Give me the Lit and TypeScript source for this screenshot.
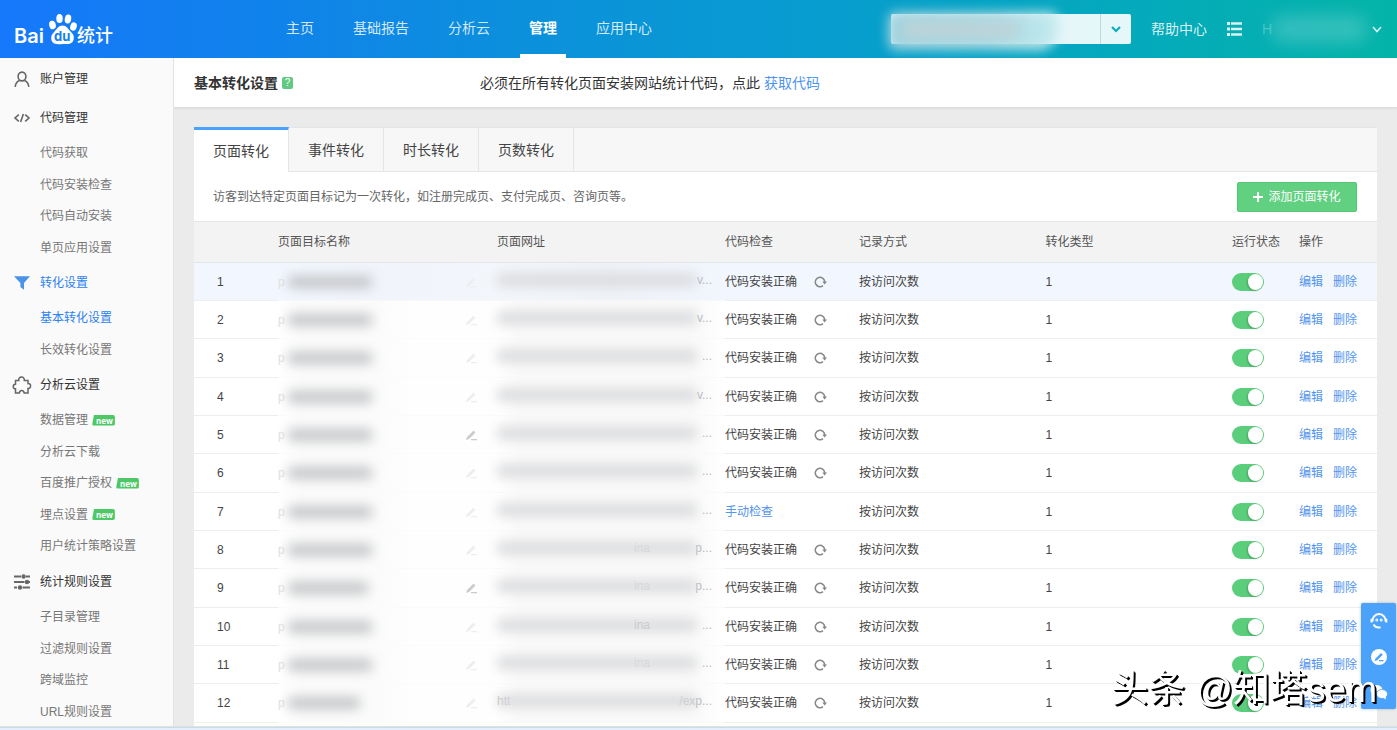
import { LitElement, html, css, svg, nothing } from "lit";
import { customElement, property, state } from "lit/decorators.js";
import { classMap } from "lit/directives/class-map.js";

const icons: Record<string, unknown> = {
  user: svg`<g fill="none" stroke="currentColor" stroke-width="1.6"><ellipse cx="8" cy="5.5" rx="3.9" ry="4.4"/><path d="M1.2 15.8C1.6 12.3 3 10.6 5.6 9.6M14.8 15.8C14.4 12.3 13 10.6 10.4 9.6"/></g>`,
  code: svg`<g fill="none" stroke="currentColor" stroke-width="1.6"><path d="M4.8 4.6L1 8L4.8 11.4M11.2 4.6L15 8L11.2 11.4M9.4 4L6.6 12"/></g>`,
  funnel: svg`<path fill="currentColor" d="M0 1.2H16L10 8V14.8L6.4 12V8Z"/>`,
  puzzle: svg`<path fill="none" stroke="currentColor" stroke-width="1.5" d="M1.5 3.4H4.8C4.4 1.4 5.7 0 7.500 0S10.600 1.400 10.300 3.400H14V6.600C15.600 6.400 16.600 7.500 16.600 9S15.600 11.600 14 11.400V16H10.200C9.900 14.300 9 13.600 7.800 13.600S5.600 14.300 5.300 16H1.500V11.800C0 11.700 -.8 10.700 -.8 9.400S0 7.300 1.500 7.200Z"/>`,
  sliders: svg`<g stroke="currentColor" stroke-width="2" fill="currentColor"><path d="M0 2.500H7M12 2.500H16M0 8H10.500M15 8H16M0 13.500H3M8.500 13.500H16"/><circle cx="9.600" cy="2.500" r="1.200"/><circle cx="13" cy="8" r="1.200"/><circle cx="6" cy="13.500" r="1.200"/></g>`,
};

interface Item {
  text: string;
  fresh?: boolean;
  active?: boolean;
}
interface Group {
  icon: string;
  text: string;
  active?: boolean;
  items: Item[];
}

const groups: Group[] = [
  { icon: "user", text: "账户管理", items: [] },
  {
    icon: "code",
    text: "代码管理",
    items: [{ text: "代码获取" }, { text: "代码安装检查" }, { text: "代码自动安装" }, { text: "单页应用设置" }],
  },
  {
    icon: "funnel",
    text: "转化设置",
    active: true,
    items: [{ text: "基本转化设置", active: true }, { text: "长效转化设置" }],
  },
  {
    icon: "puzzle",
    text: "分析云设置",
    items: [
      { text: "数据管理", fresh: true },
      { text: "分析云下载" },
      { text: "百度推广授权", fresh: true },
      { text: "埋点设置", fresh: true },
      { text: "用户统计策略设置" },
    ],
  },
  {
    icon: "sliders",
    text: "统计规则设置",
    items: [{ text: "子目录管理" }, { text: "过滤规则设置" }, { text: "跨域监控" }, { text: "URL规则设置" }],
  },
];

interface Row {
  id: number;
  tail: string;
  mask: number;
  head?: string;
  mid?: string;
  midClear?: boolean;
  pen?: boolean;
  manual?: boolean;
}

const rows: Row[] = [
  { id: 1, tail: "v...", mask: 84 },
  { id: 2, tail: "v...", mask: 84 },
  { id: 3, tail: "...", mask: 84 },
  { id: 4, tail: "v...", mask: 84 },
  { id: 5, tail: "...", mask: 84, pen: true },
  { id: 6, tail: "...", mask: 84 },
  { id: 7, tail: "...", mask: 84, manual: true },
  { id: 8, tail: "p...", mid: "ina", mask: 84 },
  { id: 9, tail: "p...", mid: "ina", mask: 80, pen: true },
  { id: 10, tail: "...", mid: "ina", midClear: true, mask: 84 },
  { id: 11, tail: "...", mid: "ina", mask: 84 },
  { id: 12, tail: "/exp...", head: "htt", mask: 72 },
];

@customElement("top-bar")
class TopBar extends LitElement {
  static styles = css`
    :host { display: block; }
    .bar {
      display: flex; align-items: stretch; height: 58px; color: #fff; overflow: hidden;
      background: linear-gradient(90deg, #1678fb 0%, #1083ea 20%, #0b92da 40%, #079dce 60%, #04a9bd 80%, #04b4a8 100%);
    }
    .logo { display: block; flex: none; width: 100px; height: 34px; margin: 13px 0 0 15px; }
    .brand { font: 600 20px "Inter", sans-serif; }
    .cn { font: 500 18px "Noto Sans CJK SC", sans-serif; }
    .du { font: 700 13px "Inter", sans-serif; }
    nav { display: flex; gap: 21px; margin-left: 162px; }
    .tab {
      display: block; padding: 0 9px; line-height: 57px; height: 54px; font-size: 14px;
      color: rgba(255, 255, 255, 0.82); text-decoration: none; border-bottom: 4px solid transparent;
    }
    .tab.on { color: #fff; font-weight: 700; border-bottom-color: #fff; }
    .right { display: flex; margin-left: auto; align-items: center; }
    .picker {
      position: relative; display: flex; width: 240px; height: 30px; margin-right: 20px; border-radius: 2px;
      background: rgba(255, 255, 255, 0.9);
    }
    .smear {
      position: absolute; left: -3px; top: -2px; width: 170px; height: 38px; border-radius: 8px 8px 20px 8px; filter: blur(6px);
      background: linear-gradient(90deg, #9ed3df 0%, #a6d9e2 60%, #c4eaee 100%);
    }
    .core {
      position: absolute; left: 12px; top: 7px; width: 115px; height: 17px; filter: blur(6px); background: #bdd3d9;
    }
    .drop {
      margin-left: auto; width: 31px; height: 30px; padding: 0; border: 0; border-left: 1px solid #bcd9de;
      background: none; color: #0aaebb; display: grid; place-items: center;
    }
    .help { font-size: 14px; color: rgba(255, 255, 255, 0.85); text-decoration: none; }
    .icon { padding: 0; border: 0; background: none; color: #d9f3f1; display: grid; place-items: center; }
    .menu { margin-left: 20px; }
    .account { display: flex; align-items: center; gap: 5px; margin: 0 15px 0 20px; }
    .who { width: 96px; height: 26px; border-radius: 10px; filter: blur(9px); background: rgba(255, 255, 255, 0.2); }
    .initial { font: 14px "Liberation Sans", sans-serif; color: rgba(255, 255, 255, 0.25); width: 4px; }
  `;
  render() {
    const links = ["主页", "基础报告", "分析云", "管理", "应用中心"];
    return html`<header class="bar">
      <svg class="logo" viewBox="0 0 100 34" role="img" aria-label="Baidu 统计">
        <text class="brand" x="-1" y="30" fill="#fff">Bai</text>
        <g fill="#fff">
          <ellipse cx="37.500" cy="12" rx="3.300" ry="4.300" transform="rotate(-12 37.5 12)"/>
          <ellipse cx="44.500" cy="5.500" rx="3.200" ry="4.500"/>
          <ellipse cx="53" cy="6" rx="3.200" ry="4.500" transform="rotate(10 53 6)"/>
          <ellipse cx="58.500" cy="13.500" rx="3.200" ry="4.300" transform="rotate(18 58.5 13.5)"/>
          <path d="M47.500 12.500C51.500 12.500 53 16 55.500 18.500C58.500 21 59.500 23.500 58.500 27C57.500 30.500 54 31.500 48 31C42 31.500 38 31.500 36.500 27.500C35.500 24 36.500 21.500 39.500 18.500C42 16 43.500 12.500 47.500 12.500Z"/>
        </g>
        <text class="du" x="39" y="28" fill="#1380f0">du</text>
        <text class="cn" x="62" y="29" fill="#fff">统计</text>
      </svg>
      <nav>
        ${links.map((t) => html`<a href="#" class=${classMap({ tab: true, on: t === "管理" })}>${t}</a>`)}
      </nav>
      <div class="right">
        <div class="picker">
          <span class="smear"></span><span class="core"></span>
          <button class="drop" aria-label="切换站点">
            <svg width="10" height="7" viewBox="0 0 10 7" fill="none" stroke="currentColor" stroke-width="2.200"><path d="M1 1L5 5L9 1"/></svg>
          </button>
        </div>
        <a class="help" href="#">帮助中心</a>
        <button class="icon menu" aria-label="列表">
          <svg width="15" height="14" viewBox="0 0 15 14" fill="currentColor"><path d="M0 0h3v3H0zM4 .3h11v2.400H4zM0 5.500h3v3H0zM4 5.800h11v2.400H4zM0 11h3v3H0zM4 11.300h11v2.400H4z"/></svg>
        </button>
        <div class="account">
          <span class="initial">H</span><span class="who"></span>
          <button class="icon" aria-label="账户">
            <svg width="10" height="7" viewBox="0 0 10 7" fill="none" stroke="currentColor" stroke-width="1.500"><path d="M1 1L5 5.500L9 1"/></svg>
          </button>
        </div>
      </div>
    </header>`;
  }
}

@customElement("side-menu")
class SideMenu extends LitElement {
  static styles = css`
    :host {
      display: block; flex: none; box-sizing: border-box; width: 174px; padding-top: 1px; background: #fafafa;
      border-right: 1px solid #e2e2e2; overflow: hidden;
    }
    a { color: inherit; text-decoration: none; }
    ul { margin: 0; padding: 0; list-style: none; }
    .head { display: flex; align-items: center; height: 39px; padding-left: 14px; gap: 10px; color: #333; }
    .head svg { color: #666; }
    .head.on { color: #2d82f0; }
    .head.on svg { color: #4a94e8; }
    .item { display: flex; align-items: center; gap: 4px; height: 31px; padding-left: 40px; color: #777; }
    .item:nth-child(odd) { height: 32px; }
    .item.on { color: #2d82f0; }
    .new {
      padding: 0 2px 0 4px; font: 700 8px/11px "Open Sans", sans-serif; color: #fff; background: #4cc966;
      border-radius: 2px; clip-path: polygon(2px 0, 100% 0, 100% 100%, 0 100%);
    }
  `;
  render() {
    return groups.map(
      (g) => html`<section>
        <a href="#" class=${classMap({ head: true, on: !!g.active })}>
          <svg width="16" height="16" viewBox="0 0 16 16" overflow="visible" aria-hidden="true">${icons[g.icon]}</svg>
          <span>${g.text}</span>
        </a>
        <ul>
          ${g.items.map(
            (i) => html`<li class=${classMap({ item: true, on: !!i.active })}>
              <a href="#">${i.text}</a>${i.fresh ? html`<span class="new">new</span>` : nothing}
            </li>`,
          )}
        </ul>
      </section>`,
    );
  }
}

@customElement("toggle-switch")
class ToggleSwitch extends LitElement {
  @property() label = "";
  static styles = css`
    :host { display: block; width: 32px; height: 18px; }
    input {
      appearance: none; display: block; box-sizing: border-box; width: 32px; height: 18px; margin: 0; padding: 1px;
      border-radius: 9px; background: #ccc;
    }
    input::before { content: ""; display: block; width: 15px; height: 16px; border-radius: 8px; background: #fff; }
    input:checked { background: #5ace7b; }
    input:checked::before { margin-left: auto; box-shadow: -1px 1px 2px rgba(0, 0, 0, 0.2); }
  `;
  render() {
    return html`<input type="checkbox" role="switch" aria-label=${this.label} checked />`;
  }
}

@customElement("goal-table")
class GoalTable extends LitElement {
  static styles = css`
    :host { display: block; }
    table { width: 100%; table-layout: fixed; border-collapse: separate; border-spacing: 0; text-align: left; }
    th, td { padding: 0; font-weight: 400; white-space: nowrap; box-sizing: border-box; }
    th { height: 42px; background: #f3f3f3; color: #555; border-top: 1px solid #e6e6e6; border-bottom: 1px solid #e4e6e8; }
    td { height: 38px; color: #444; border-bottom: 1px solid #eeeeee; }
    tr:nth-child(3n) td { height: 39px; }
    tr:first-child td { background: #f2f6fe; }
    .no { width: 84px; padding-left: 23px; }
    .name { width: 219px; }
    .url { width: 228px; }
    .check { width: 134px; }
    .state { width: 67px; }
    .ops { width: 78px; }
    td.name { border-bottom-color: #fbfbfb; background: linear-gradient(90deg, #fff, #fbfbfb 10%, #fbfbfb 45%, #fefefe 60%); }
    td.url { border-bottom-color: #f9f9f9; background: linear-gradient(90deg, #fefefe, #f9f9f9 10%, #f9f9f9 85%, #fff); }
    tr:first-child td.name { background: linear-gradient(90deg, #f2f6fe, #f1f4fa 50%, #f3f6fb); border-bottom-color: #f7f8fa; }
    tr:first-child td.url { background: linear-gradient(90deg, #f3f6fb, #eff2f7 50%, #f2f6fe); border-bottom-color: #f7f8fa; }
    .veil { display: flex; align-items: center; height: 18px; }
    .blob { height: 12px; filter: blur(6px); background: #c3c5c7; border-radius: 4px; }
    .hint { width: 10px; color: #e2e2e2; }
    .pen { margin: 0 20px 0 auto; color: #eeeeee; }
    .pen.clear { color: #cccccc; }
    .address { display: grid; width: 215px; height: 22px; }
    .address > * { grid-area: 1 / 1; }
    .long { width: 200px; margin-top: 3px; background: #d9dadc; }
    .bits { display: flex; color: #c4c4c8; }
    .mid { margin-left: auto; color: #d2d2d4; }
    .mid.clear { color: #a8a8ac; }
    .tail { width: 62px; text-align: right; }
    .mid + .tail { margin-left: 0; }
    .bits .tail { color: #b8b8bc; }
    .checked { display: flex; align-items: center; gap: 17px; }
    .again { display: block; padding: 0; border: 0; background: none; color: #888; line-height: 0; }
    a { color: #5394ee; text-decoration: none; }
    .acts { display: flex; gap: 10px; }
  `;
  render() {
    return html`<table>
      <thead>
        <tr>
          <th class="no" aria-label="序号"></th>
          <th class="name">页面目标名称</th>
          <th class="url">页面网址</th>
          <th class="check">代码检查</th>
          <th>记录方式</th>
          <th>转化类型</th>
          <th class="state">运行状态</th>
          <th class="ops">操作</th>
        </tr>
      </thead>
      <tbody>
        ${rows.map(
          (r) => html`<tr>
            <td class="no">${r.id}</td>
            <td class="name">
              <div class="veil">
                <span class="hint">p</span><span class="blob" style="width:${r.mask}px"></span>
                <svg class=${classMap({ pen: true, clear: !!r.pen })} width="12" height="12" viewBox="0 0 12 12" fill="currentColor"><path d="M1 11L2 8L8.500 1.500L10.500 3.500L4 10ZM6 10h6v1.200H6z"/></svg>
              </div>
            </td>
            <td class="url">
              <div class="address">
                <span class="blob long"></span>
                <span class="bits">
                  <span>${r.head ?? nothing}</span>
                  <span class=${classMap({ mid: true, clear: !!r.midClear })}>${r.mid ?? nothing}</span>
                  <span class="tail">${r.tail}</span>
                </span>
              </div>
            </td>
            <td>
              ${r.manual
                ? html`<a href="#">手动检查</a>`
                : html`<div class="checked">
                    <span>代码安装正确</span>
                    <button class="again" aria-label="重新检查">
                      <svg width="13" height="12" viewBox="0 0 13 12"><path fill="none" stroke="currentColor" stroke-width="1.500" d="M9 9.700A4.700 4.700 0 1 1 10.700 6"/><path fill="currentColor" d="M8.300 5.600H13L10.600 8.600Z"/></svg>
                    </button>
                  </div>`}
            </td>
            <td>按访问次数</td>
            <td>1</td>
            <td><toggle-switch .label=${`运行状态 ${r.id}`}></toggle-switch></td>
            <td><div class="acts"><a href="#">编辑</a><a href="#">删除</a></div></td>
          </tr>`,
        )}
      </tbody>
    </table>`;
  }
}

@customElement("app-root")
class AppRoot extends LitElement {
  @state() private tab = 0;
  static styles = css`
    :host {
      display: flex; flex-direction: column; height: 100vh; overflow: hidden; color: #444;
      font: 12px/18px "Liberation Sans", "Noto Sans CJK SC", sans-serif; background: #ebebeb;
    }
    a { color: #4d94f0; text-decoration: none; }
    top-bar { flex: none; }
    .body { display: flex; flex: 1; min-height: 0; }
    main { flex: 1; min-width: 0; overflow: hidden; }
    .title {
      display: flex; align-items: center; height: 49px; padding-left: 20px; background: #fff; color: #333;
      border-bottom: 1px solid #dedede; box-shadow: 0 1px 2px rgba(0, 0, 0, 0.06); font-size: 14px;
    }
    h1 { margin: 0; font-size: 14px; font-weight: 700; }
    .lead { display: flex; align-items: center; gap: 4px; width: 286px; }
    .q {
      width: 11px; height: 12px; border-radius: 2px; background: #62c982; color: #fff; font-size: 10px; line-height: 12px;
      text-align: center;
    }
    .card { margin: 19px 20px 0; background: #fff; min-height: 600px; }
    .tabs { display: flex; background: #f7f7f7; box-shadow: inset 0 1px #e3e5e7, inset 0 -1px #e3e5e7; height: 45px; }
    .tab {
      height: 45px; padding: 0 19px; border: 0; border-right: 1px solid #e3e5e7; background: none; color: #444;
      font: 14px/42px "Liberation Sans", "Noto Sans CJK SC", sans-serif;
    }
    .tab.on { background: #fff; border-top: 3px solid #4aa2fb; }
    .intro { display: flex; align-items: center; justify-content: space-between; height: 49px; padding: 0 20px 0 19px; color: #666; }
    .add {
      display: flex; align-items: center; justify-content: center; gap: 5px; width: 120px; height: 30px; padding: 0;
      border: 1px solid #56c574; border-radius: 2px; background: #62d081; color: #fff;
      font: 12px/18px "Liberation Sans", "Noto Sans CJK SC", sans-serif;
    }
    .strip { flex: none; height: 2px; background: #e4eefc; border-top: 1px solid #c3dcf8; box-shadow: 0 -1px #e4e3d3; margin-top: 1px; }
    .dock {
      position: fixed; right: 1px; bottom: 21px; display: flex; flex-direction: column; align-items: center;
      justify-content: space-around; width: 35px; height: 106px; border-radius: 2px; background: #4aa2fb;
      box-shadow: 0 0 3px rgba(0, 0, 0, 0.25);
    }
    .dock button { padding: 0; border: 0; background: none; line-height: 0; }
    .mark {
      position: fixed; right: 20px; bottom: 15px; font: 37px/50px "Liberation Sans", "Noto Sans CJK SC", sans-serif;
      color: #fff; text-shadow: 1px 1px #000, 2px 2px #000; white-space: nowrap; pointer-events: none;
    }
  `;
  render() {
    const tabs = ["页面转化", "事件转化", "时长转化", "页数转化"];
    return html`
      <top-bar></top-bar>
      <div class="body">
        <side-menu></side-menu>
        <main>
          <div class="title">
            <div class="lead"><h1>基本转化设置</h1><span class="q">?</span></div>
            <span>必须在所有转化页面安装网站统计代码，点此 <a href="#">获取代码</a></span>
          </div>
          <div class="card">
            <div class="tabs" role="tablist">
              ${tabs.map(
                (t, i) => html`<button
                  role="tab"
                  aria-selected=${i === this.tab}
                  class=${classMap({ tab: true, on: i === this.tab })}
                  @click=${() => (this.tab = i)}
                >${t}</button>`,
              )}
            </div>
            <div class="intro">
              <span>访客到达特定页面目标记为一次转化，如注册完成页、支付完成页、咨询页等。</span>
              <button class="add">
                <svg width="10" height="10" viewBox="0 0 10 10" stroke="#fff" stroke-width="2"><path d="M5 0V10M0 5H10"/></svg>添加页面转化
              </button>
            </div>
            <goal-table></goal-table>
          </div>
        </main>
      </div>
      <div class="strip"></div>
      <aside class="dock">
        <button aria-label="客服">
          <svg width="18" height="18" viewBox="0 0 18 18" fill="none" stroke="#fff" stroke-width="2"><path d="M2.500 9.500A6.600 6.600 0 1 1 15.600 9.500M3.500 12.500C5 15 7.500 16 10.500 15.300"/><path d="M1.500 7V10.500M16.300 7V10.500"/><circle cx="6.800" cy="8" r=".5"/><circle cx="11.200" cy="8" r=".5"/></svg>
        </button>
        <button aria-label="反馈">
          <svg width="16" height="16" viewBox="0 0 16 16"><circle cx="8" cy="8" r="8" fill="#fff"/><path fill="#4aa2fb" d="M3.500 12L4.500 9.500L10 4L11.800 5.800L6.300 11.200ZM8 11h4.500v1.200H8z"/></svg>
        </button>
        <button aria-label="微信">
          <svg width="18" height="16" viewBox="0 0 18 16" fill="#fff"><ellipse cx="6.500" cy="6" rx="6" ry="5"/><path d="M2.500 9L2 12.500L6 10.500Z"/><ellipse cx="12" cy="10" rx="5.500" ry="4.500" stroke="#4aa2fb" stroke-width=".8"/><path d="M13 13.500L16 15.500L15.500 12Z"/></svg>
        </button>
      </aside>
      <div class="mark">头条 @知塔sem</div>
    `;
  }
}
